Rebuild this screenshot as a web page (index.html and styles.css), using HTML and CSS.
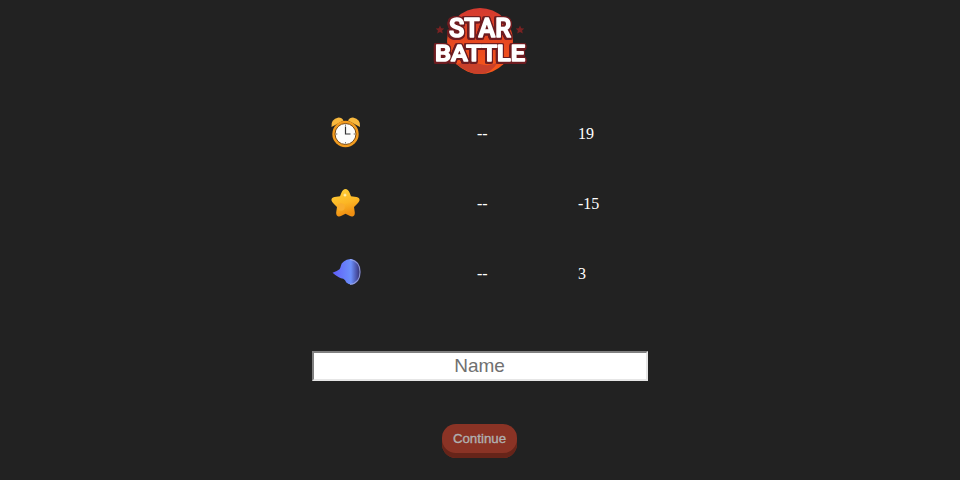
FILE: index.html
```html
<!DOCTYPE html>
<html lang="en">
<head>
<meta charset="utf-8">
<title>Star Battle</title>
<link rel="stylesheet" href="styles.css">
</head>
<body>
<main class="page">
  <svg class="logo" width="100" height="70" viewBox="0 0 100 70" role="img" aria-label="Star Battle">
    <defs>
      <linearGradient id="planet" x1="0" y1="0" x2="0" y2="1">
        <stop offset="0" stop-color="#d43a30"/>
        <stop offset="0.55" stop-color="#e8481f"/>
        <stop offset="1" stop-color="#f8591a"/>
      </linearGradient>
    </defs>
    <circle cx="50" cy="37" r="33" fill="url(#planet)"/>
    <path d="M26 60q14-3 24 0t18-2q-7 12-18 12t-24-10z" fill="#c9402a"/>
    <path d="M10 21.500l1.300 2.800 3 .3-2.200 2 .7 3-2.800-1.500-2.800 1.500.7-3-2.200-2 3-.3z" fill="#7a2222"/>
    <path d="M90 21.500l1.300 2.800 3 .3-2.200 2 .7 3-2.800-1.500-2.800 1.500.7-3-2.200-2 3-.3z" fill="#7a2222"/>
    <g class="logo-text">
      <text x="50" y="32.500" textLength="62" lengthAdjust="spacingAndGlyphs">STAR</text>
      <text class="logo-small" x="50" y="57" textLength="90" lengthAdjust="spacingAndGlyphs">BATTLE</text>
    </g>
  </svg>

  <div class="stats">
    <div class="stat-row">
      <svg class="icon" width="32" height="32" viewBox="0 0 32 32" aria-hidden="true">
        <path d="M1.500 10q-1-8 7-9.500 3.500 0 5 3z" fill="#f8b83e"/>
        <path d="M30 10q1-8-7-9.500-3.500 0-5 3z" fill="#f8b83e"/>
        <circle cx="15.500" cy="17" r="13.200" fill="#f39c1f"/>
        <circle cx="15.500" cy="17" r="10.500" fill="#fdfdfb" stroke="#7a4a12" stroke-width="1"/>
        <path d="M15.500 9.500v7.500h5" fill="none" stroke="#333" stroke-width="1.200"/>
        <path d="M15.500 7.500v1.300M15.500 25.200v1.300M6 17h1.300M23.700 17h1.300" stroke="#666" stroke-width="1"/>
      </svg>
      <span>--</span>
      <span>19</span>
    </div>
    <div class="stat-row">
      <svg class="icon" width="32" height="32" viewBox="0 0 32 32" aria-hidden="true">
        <defs>
          <linearGradient id="star" x1="0" y1="0" x2="0.300" y2="1">
            <stop offset="0" stop-color="#ffd23a"/>
            <stop offset="0.6" stop-color="#fcb625"/>
            <stop offset="1" stop-color="#ef8f12"/>
          </linearGradient>
        </defs>
        <path d="M15.500 2q2.500 0 4 3.500l1.500 3.700 5.500.8q3.500.8 3 3.500-.5 1.500-2 3l-3.500 3.500.8 5.500q.2 3.500-2.300 4-1.500.2-3-.8l-4-2-4 2q-1.500 1-3 .8-2.500-.5-2.300-4l.8-5.500-3.500-3.500q-1.500-1.500-2-3-.5-2.700 3-3.500l5.500-.8 1.500-3.700q1.500-3.500 4-3.500z" fill="url(#star)"/>
        <circle cx="11" cy="20" r="3.800" fill="#f9ad2e"/>
        <path d="M15 6l.6 1.500 1.500.6-1.500.6-.6 1.500-.6-1.500-1.500-.6 1.500-.6z" fill="#fff6c0"/>
      </svg>
      <span>--</span>
      <span>-15</span>
    </div>
    <div class="stat-row">
      <svg class="icon" width="32" height="32" viewBox="0 0 32 32" aria-hidden="true">
        <defs>
          <linearGradient id="orb" x1="0" y1="0" x2="1" y2="0">
            <stop offset="0" stop-color="#5f5cf8"/>
            <stop offset="0.65" stop-color="#6c90fb"/>
            <stop offset="0.88" stop-color="#454a9c"/>
            <stop offset="1" stop-color="#2c2c58"/>
          </linearGradient>
        </defs>
        <path d="M2.500 15.700q4-1 7-3.400 1-1.300 1.300-3.300.3-3 3-4.500 3-3 8-2.500 9 2.500 9 12.700 0 10-8 12.800-4 .5-6.500-2-1-2.500-3-3.800-2.500-.3-4.500-1.500-3-1.500-6.300-4.500z" fill="url(#orb)"/>
        <path class="icon-rim" d="M20 2.500q10 1.500 10 12.500t-10 12.500"/>
      </svg>
      <span>--</span>
      <span>3</span>
    </div>
  </div>

  <input class="name" type="text" placeholder="Name">

  <button class="continue" type="button">Continue</button>
</main>
</body>
</html>
```

FILE: styles.css
```css
* {
  box-sizing: border-box;
}

html,
body {
  margin: 0;
  height: 100%;
  background: #222222;
  overflow: hidden;
}

.page {
  display: flex;
  flex-direction: column;
  align-items: center;
  padding-top: 4px;
  font-family: "Liberation Serif", serif;
  font-size: 16px;
  color: #ffffff;
}

.logo {
  display: block;
  flex: none;
}

.logo-text text {
  font-family: "Roboto", "Liberation Sans", sans-serif;
  font-weight: 500;
  font-size: 25px;
  text-anchor: middle;
  stroke-linejoin: round;
  fill: #ffffff;
  stroke: #ffffff;
  stroke-width: 1.500px;
  filter: drop-shadow(1.200px 0 0 #6e1c20) drop-shadow(-1.200px 0 0 #6e1c20) drop-shadow(0 1px 0 #6e1c20) drop-shadow(0 1.200px 0 #6e1c20) drop-shadow(0 -1px 0 #6e1c20);
}

.logo-text .logo-small {
  font-size: 22px;
}

.stats {
  width: 336px;
  margin-top: 24px;
  display: flex;
  flex-direction: column;
}

.stat-row {
  display: grid;
  grid-template-columns: 165px 101px 70px;
  align-items: center;
  height: 70px;
}

.stat-row span {
  padding-top: 2px;
}

.icon {
  display: block;
  margin-left: 18px;
}

.icon-rim {
  fill: none;
  stroke: #aab2e8;
  stroke-width: 1.100px;
  opacity: 0.75;
}

.name {
  display: block;
  width: 336px;
  height: 30px;
  margin-top: 43px;
  padding: 0 1px 0 0;
  border-width: 2px;
  border-style: solid;
  border-color: #808080 #e6e6e6 #e6e6e6 #808080;
  background: #ffffff;
  font-family: "Liberation Sans", Arial, sans-serif;
  font-size: 19px;
  text-align: center;
  outline: none;
}

.name::placeholder {
  color: #707070;
  opacity: 1;
}

.continue {
  display: block;
  width: 75px;
  height: 34px;
  margin: 43px 1px 0 0;
  padding: 0 0 5px;
  border: 0;
  border-radius: 14px;
  background: #8a3325;
  box-shadow: inset 0 -5px 0 #662419;
  color: #b0b0b0;
  font-family: "Liberation Sans", Arial, sans-serif;
  font-size: 13.300px;
  font-weight: 400;
  -webkit-text-stroke: 0.35px #b0b0b0;
}
```
